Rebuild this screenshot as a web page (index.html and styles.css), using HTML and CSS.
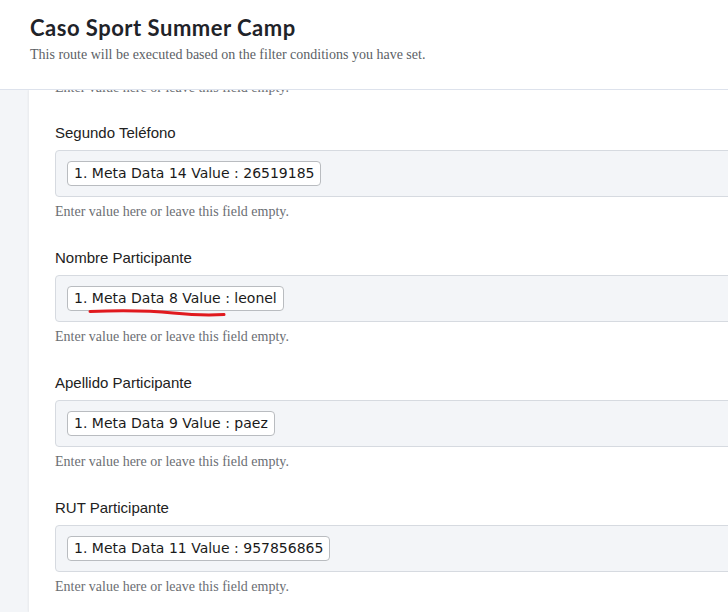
FILE: index.html
```html
<!DOCTYPE html>
<html lang="es">
<head>
<meta charset="utf-8">
<title>Caso Sport Summer Camp</title>
<link rel="stylesheet" href="styles.css">
</head>
<body>
<header class="top">
  <h1 class="title">Caso Sport Summer Camp</h1>
  <p class="subtitle">This route will be executed based on the filter conditions you have set.</p>
</header>
<div class="layout">
  <aside class="rail"></aside>
  <main class="panel">
    <div class="fields">
      <p class="hint">Enter value here or leave this field empty.</p>

      <section class="field">
        <label class="label">Segundo Teléfono</label>
        <div class="box"><span class="chip">1. Meta Data 14 Value : 26519185</span></div>
        <p class="hint">Enter value here or leave this field empty.</p>
      </section>

      <section class="field">
        <label class="label">Nombre Participante</label>
        <div class="box">
          <span class="chip marked">1. Meta Data 8 Value : leonel
            <svg class="scribble" width="140" height="10" viewBox="0 0 140 10" aria-hidden="true">
              <path d="M2 3.5 C 30 2.5, 60 2.5, 85 5 S 120 7.5, 136 6.5" fill="none" stroke="#e0191e" stroke-width="3" stroke-linecap="round"/>
            </svg>
          </span>
        </div>
        <p class="hint">Enter value here or leave this field empty.</p>
      </section>

      <section class="field">
        <label class="label">Apellido Participante</label>
        <div class="box"><span class="chip">1. Meta Data 9 Value : paez</span></div>
        <p class="hint">Enter value here or leave this field empty.</p>
      </section>

      <section class="field">
        <label class="label">RUT Participante</label>
        <div class="box"><span class="chip">1. Meta Data 11 Value : 957856865</span></div>
        <p class="hint">Enter value here or leave this field empty.</p>
      </section>
    </div>
  </main>
</div>
</body>
</html>
```

FILE: styles.css
```css
* { box-sizing: border-box; }
html, body { margin: 0; padding: 0; height: 100%; overflow: hidden; background: #fff; }

.top {
  height: 90px;
  padding: 14px 30px 0;
  border-bottom: 1px solid #dde2ec;
  background: #fff;
}
.title {
  margin: 0;
  font-family: Lato, "Noto Sans", sans-serif;
  font-weight: 700;
  font-size: 22px;
  line-height: 28px;
  letter-spacing: 0.5px;
  color: #1f2329;
}
.subtitle {
  margin: 3px 0 0;
  font-family: "Liberation Serif", serif;
  font-size: 14px;
  line-height: 20px;
  color: #5c5f66;
}

.layout {
  display: flex;
  height: calc(100% - 90px);
  overflow: hidden;
}
.rail {
  flex: 0 0 29px;
  background: #f3f5f8;
}
.panel {
  flex: 0 0 760px;
  padding-left: 26px;
  background: #fff;
  box-shadow: -1px 0 2px rgba(0,0,0,0.05);
  overflow: hidden;
}
.fields { margin-top: -12px; }

.field { margin-top: 26px; }
.label {
  display: block;
  font-family: "Liberation Sans", Arial, sans-serif;
  font-size: 15px;
  line-height: 20px;
  color: #222;
}
.box {
  margin-top: 7px;
  height: 47px;
  padding: 10px 11px;
  background: #f3f5f8;
  border: 1px solid #d6dae0;
  border-radius: 4px;
}
.chip {
  position: relative;
  display: inline-block;
  height: 25px;
  padding: 0 6px;
  border: 1px solid #b9bcc0;
  border-radius: 4px;
  background: #fff;
  font-family: "DejaVu Sans", Verdana, sans-serif;
  font-size: 14px;
  line-height: 23px;
  color: #1a1a1a;
  white-space: nowrap;
}
.scribble {
  position: absolute;
  left: 20px;
  top: 21px;
}
.hint {
  margin: 5px 0 0;
  font-family: "Liberation Serif", serif;
  font-size: 14px;
  line-height: 20px;
  color: #6b6e73;
}
.fields > .hint:first-child { margin-top: 0; }
.field:first-of-type { margin-top: 25px; }
```
